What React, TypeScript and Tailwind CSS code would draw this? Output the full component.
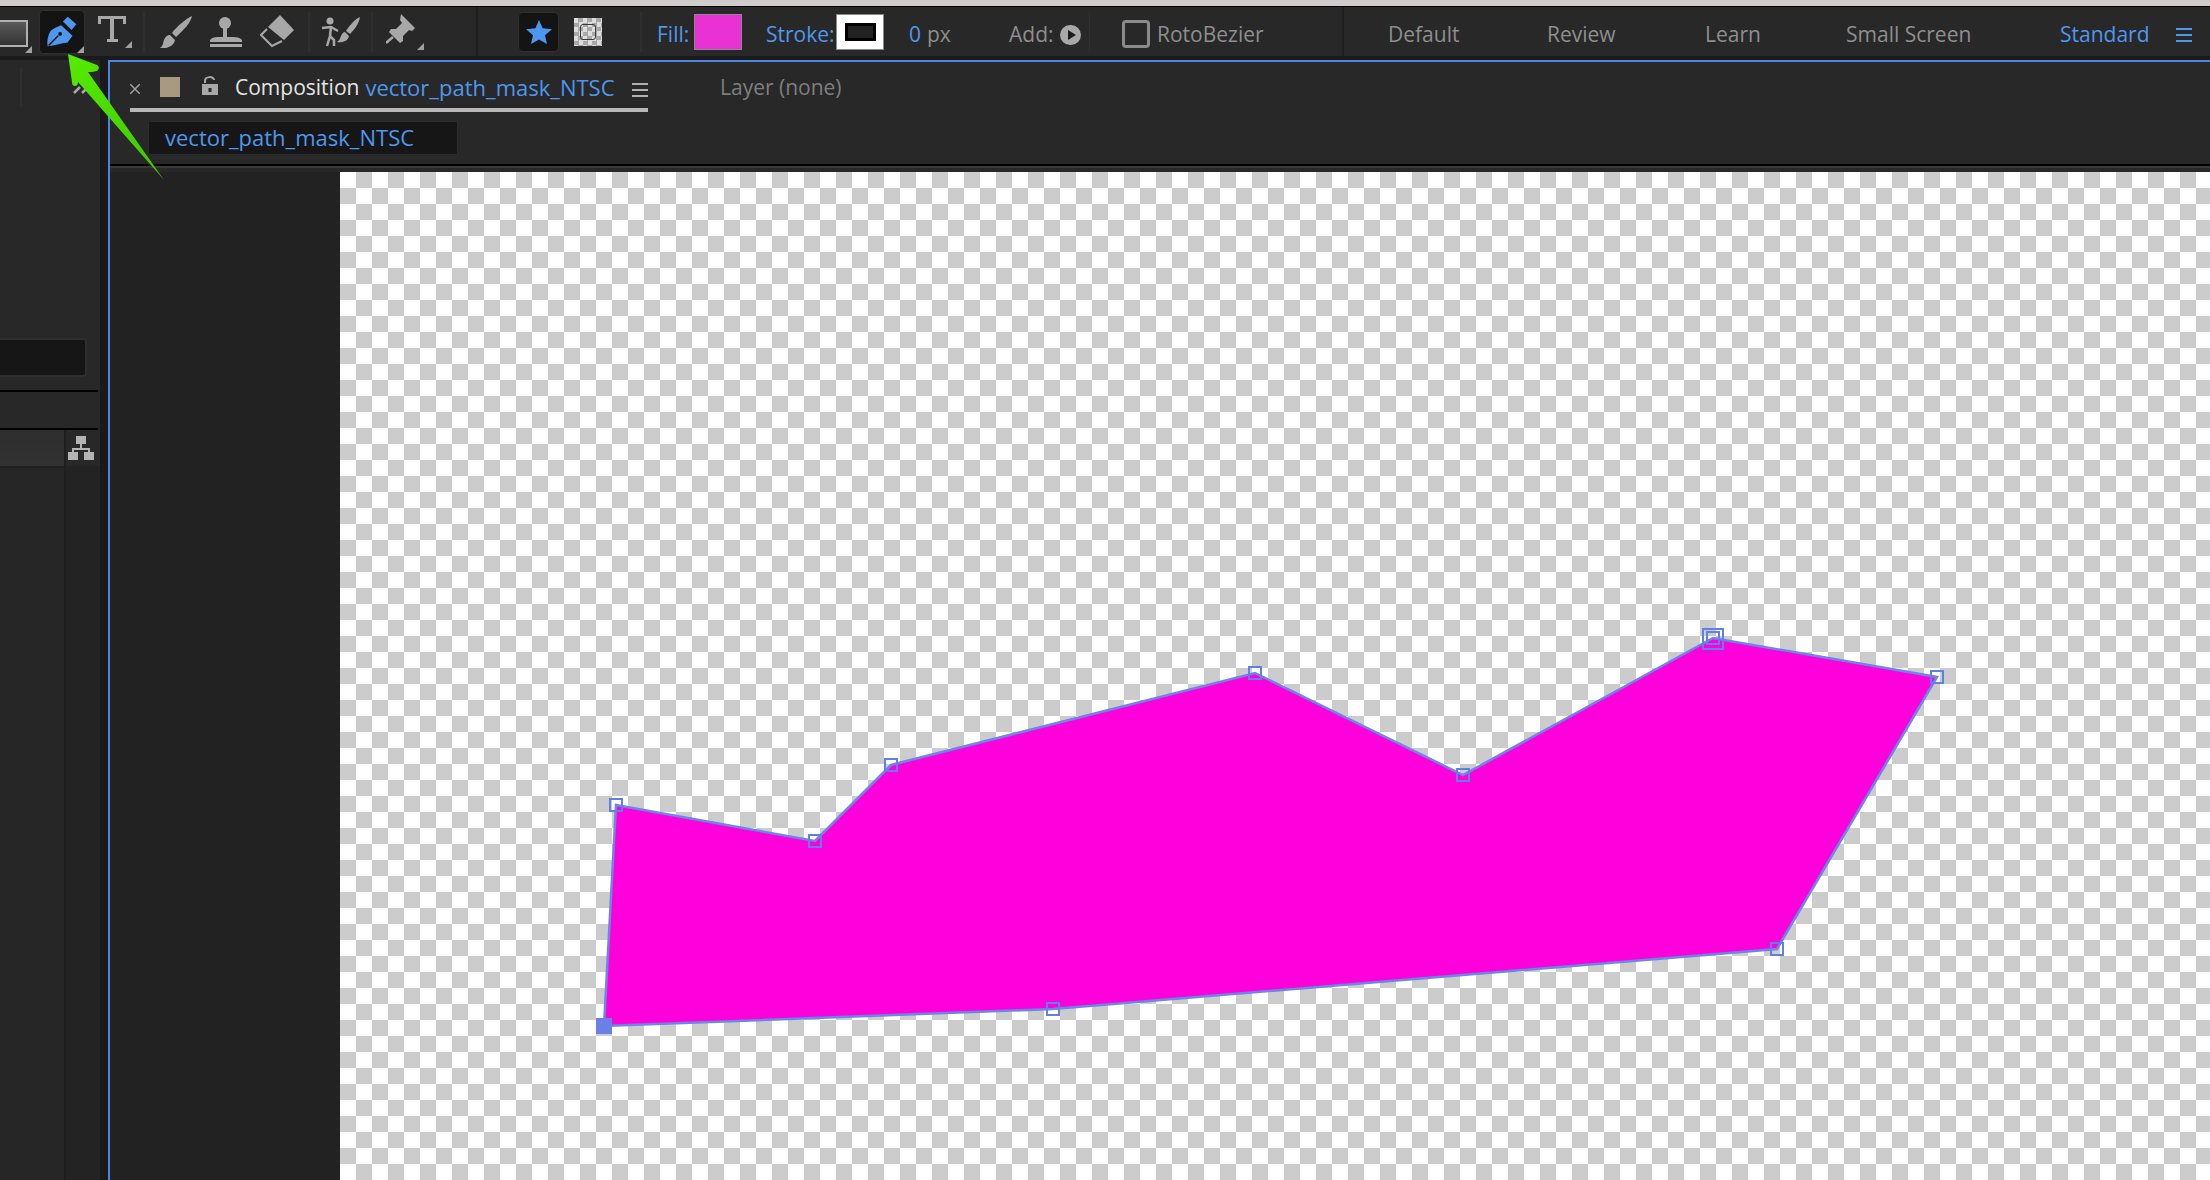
const FONT = "font-['Open_Sans',sans-serif]";

const corners: [number, number][] = [
  [604, 1026],
  [616, 805],
  [815, 841],
  [891, 765],
  [1255, 673],
  [1463, 775],
  [1713, 638],
  [1937, 677],
  [1777, 949],
  [1053, 1009],
];

function Corner() {
  return (
    <span className="absolute bottom-0 right-0 h-0 w-0 border-b-[7px] border-l-[7px] border-b-[#a0a0a0] border-l-transparent" />
  );
}

function Sep({ ml }: { ml: string }) {
  return <div className={`h-[40px] w-[2px] bg-[#2f2f2f] ${ml}`} />;
}

function PenIcon() {
  return (
    <svg viewBox="39 9 46 44" className="h-[44px] w-[46px]">
      <path d="M63 20 L68 15 L77 23 L72 29 Z" fill="#4e97ee" />
      <path d="M61 24 L73 35 C71 38 69 40 68 42 C61 43 54 45 47 46 C46 41 47 35 50 30 C53 27 57 26 61 24 Z" fill="#4e97ee" />
      <path d="M48 45 L58 35" stroke="#141414" strokeWidth="1.5" />
      <circle cx="60" cy="33" r="2" fill="#141414" />
    </svg>
  );
}

function TypeIcon() {
  return (
    <svg viewBox="98 17 28 26" className="h-[26px] w-[28px]" fill="#a8a8a8">
      <path d="M98 17 H126 V25 H123 V20 H114 V40 H118 V43 H107 V40 H110 V20 H101 V25 H98 Z" />
    </svg>
  );
}

function BrushIcon() {
  return (
    <svg viewBox="160 13 33 33" className="h-[33px] w-[33px]" fill="#a8a8a8">
      <path d="M192 14 C187 16 177 24 172 31 L176 35 C184 28 191 20 192 14 Z" />
      <path d="M170 33 L175 38 C174 44 167 47 160 46 C163 44 163 41 164 38 C165 35 167 33 170 33 Z" />
    </svg>
  );
}

function StampIcon() {
  return (
    <svg viewBox="210 13 32 31" className="h-[31px] w-[32px]" fill="#a8a8a8">
      <circle cx="225" cy="20" r="6" />
      <rect x="223" y="24" width="4" height="11" />
      <path d="M210 39 V37 Q212 34 218 34 H233 Q240 34 242 37 V39 Z" />
      <rect x="210" y="41" width="32" height="3" />
    </svg>
  );
}

function EraserIcon() {
  return (
    <svg viewBox="260 13 34 33" className="h-[33px] w-[34px]">
      <path d="M280 13 L294 28 L284 38 L268 25 Z" fill="#a8a8a8" />
      <path d="M267 27 L261 33 L272 44 L282 39" fill="none" stroke="#a8a8a8" strokeWidth="2" />
    </svg>
  );
}

function PuppetIcon() {
  return (
    <svg viewBox="321 14 39 32" className="h-[32px] w-[39px]">
      <circle cx="330" cy="19" r="3.5" fill="#a8a8a8" />
      <path d="M322 26 L331 25 L338 29 M331 25 L330 34 L327 44 M330 34 L334 38 L334 44" fill="none" stroke="#a8a8a8" strokeWidth="2.5" />
      <path d="M360 15 C355 17 349 24 346 29 L350 32 C355 27 359 21 360 15 Z" fill="#a8a8a8" />
      <path d="M345 30 L349 34 C348 39 343 41 337 40 C340 38 340 36 341 34 C342 32 343 30 345 30 Z" fill="#a8a8a8" />
    </svg>
  );
}

function PinIcon() {
  return (
    <svg viewBox="386 14 30 30" className="h-[30px] w-[30px]">
      <path d="M401 14 L415 28 L412 31 L409 30 L403 36 L403 41 L400 43 L389 32 L391 29 L396 29 L402 23 L400 20 Z" fill="#a8a8a8" />
      <path d="M393 37 L386 43" stroke="#a8a8a8" strokeWidth="2.5" />
    </svg>
  );
}

function Tree() {
  return (
    <svg viewBox="68 436 26 24" className="h-[24px] w-[26px]" fill="#b4b4b4">
      <rect x="76" y="436" width="10" height="8" />
      <rect x="80" y="444" width="2" height="4" />
      <rect x="72" y="448" width="18" height="2" />
      <rect x="72" y="450" width="2" height="2" />
      <rect x="88" y="450" width="2" height="2" />
      <rect x="68" y="452" width="10" height="8" />
      <rect x="84" y="452" width="10" height="8" />
    </svg>
  );
}

function Menu({ color, className }: { color: string; className: string }) {
  return (
    <div className={`flex h-[14px] w-[16px] shrink-0 flex-col justify-between ${className}`}>
      <span className={`h-[2px] ${color}`} />
      <span className={`h-[2px] ${color}`} />
      <span className={`h-[2px] ${color}`} />
    </div>
  );
}

function Toolbar() {
  return (
    <div className={`flex h-[49px] items-center overflow-hidden whitespace-nowrap bg-[#282828] ${FONT} text-[21px] text-[#8e8e8e]`}>
      <div className="relative -ml-[4px] flex h-[42px] w-[36px] shrink-0 items-start pt-[9px]">
        <div className="h-[27px] w-[32px] border-2 border-[#b0b0b0] bg-gradient-to-b from-[#5a5a5a] to-[#333333]" />
        <Corner />
      </div>
      <div className="relative ml-[7px] flex h-[44px] w-[46px] shrink-0 items-center justify-center rounded-[5px] border border-[#2f2f2f] bg-[#141414]">
        <PenIcon />
        <Corner />
      </div>
      <div className="relative ml-[13px] flex h-[32px] w-[34px] shrink-0 items-start">
        <TypeIcon />
        <Corner />
      </div>
      <Sep ml="ml-[11px]" />
      <div className="ml-[15px]"><BrushIcon /></div>
      <div className="ml-[17px]"><StampIcon /></div>
      <div className="ml-[18px]"><EraserIcon /></div>
      <Sep ml="ml-[14px]" />
      <div className="ml-[11px]"><PuppetIcon /></div>
      <Sep ml="ml-[11px]" />
      <div className="relative ml-[13px] h-[36px] w-[38px]">
        <PinIcon />
        <Corner />
      </div>
      <div className="ml-[52px] h-[49px] w-[2px] bg-[#1e1e1e]" />
      <div className="ml-[40px] flex h-[40px] w-[41px] shrink-0 items-center justify-center rounded-[5px] border border-[#2f2f2f] bg-[#141414]">
        <svg viewBox="0 0 26 24" className="h-[24px] w-[26px]" fill="#4e97ee">
          <path d="M13 0 L16.6 8.2 L26 9.2 L19 15.2 L21 24 L13 19.4 L5 24 L7 15.2 L0 9.2 L9.4 8.2 Z" />
        </svg>
      </div>
      <div className="ml-[15px] h-[28px] w-[28px] shrink-0 bg-[conic-gradient(#a8a8a8_25%,#dddddd_0_50%,#a8a8a8_0_75%,#dddddd_0)] bg-[length:9px_9px] p-[6px]">
        <div className="h-full w-full rounded-[3px] border border-[#3a3a3a]" />
      </div>
      <Sep ml="ml-[38px]" />
      <span className="ml-[15px] w-[33px] shrink-0 pt-[6px] text-[#4e97ee]">Fill:</span>
      <div className="ml-[4px] h-[36px] w-[48px] shrink-0 border border-[#8a8a8a] bg-[#e931d5]" />
      <span className="ml-[24px] w-[67px] shrink-0 pt-[6px] text-[#4e97ee]">Stroke:</span>
      <div className="ml-[3px] flex h-[36px] w-[48px] shrink-0 items-center justify-center border border-[#8a8a8a] bg-white">
        <div className="h-[18px] w-[31px] border-[3px] border-black bg-[#222222]" />
      </div>
      <span className="ml-[25px] w-[11px] shrink-0 pt-[6px] text-[#4e97ee]">0</span>
      <span className="ml-[7px] w-[22px] shrink-0 pt-[6px]">px</span>
      <span className="ml-[60px] w-[44px] shrink-0 pt-[6px]">Add:</span>
      <div className="ml-[7px] mt-[6px] flex h-[20px] w-[21px] shrink-0 items-center justify-center rounded-full bg-[#a8a8a8]">
        <div className="ml-[2px] h-0 w-0 border-y-[5px] border-l-[8px] border-y-transparent border-l-[#1c1c1c]" />
      </div>
      <div className="ml-[8px] h-[40px] w-[1px] bg-[#2f2f2f]" />
      <div className="ml-[32px] mt-[4px] h-[28px] w-[28px] shrink-0 rounded-[4px] border-[3px] border-[#8a8a8a]" />
      <span className="ml-[7px] w-[106px] shrink-0 pt-[6px]">RotoBezier</span>
      <div className="ml-[79px] h-[49px] w-[2px] bg-[#1e1e1e]" />
      <span className="ml-[44px] w-[71px] shrink-0 pt-[6px]">Default</span>
      <span className="ml-[88px] w-[70px] shrink-0 pt-[6px]">Review</span>
      <span className="ml-[88px] w-[54px] shrink-0 pt-[6px]">Learn</span>
      <span className="ml-[87px] w-[126px] shrink-0 pt-[6px]">Small Screen</span>
      <span className="ml-[88px] w-[87px] shrink-0 pt-[6px] text-[#4e97ee]">Standard</span>
      <Menu color="bg-[#4e97ee]" className="ml-[29px] mt-[6px]" />
    </div>
  );
}

function LeftPanel() {
  return (
    <div className="mt-[4px] flex w-[100px] shrink-0 flex-col bg-[#282828]">
      <div className="flex h-[48px] items-start pt-[8px]">
        <div className="ml-[20px] h-[39px] w-[2px] bg-[#303030]" />
        <svg viewBox="0 0 15 11" className="ml-[51px] mt-[15px] h-[11px] w-[15px]" fill="none" stroke="#a8a8a8" strokeWidth="2.5">
          <path d="M1 10 L7 4 M9 10 L14 5" />
        </svg>
      </div>
      <div className="h-[230px]" />
      <div className="h-[39px] w-[87px] rounded-r-[4px] border-2 border-l-0 border-[#2f2f2f] bg-[#161616]" />
      <div className="mt-[13px] h-[2px] w-[98px] bg-black" />
      <div className="h-[36px]" />
      <div className="h-[2px] w-[98px] bg-black" />
      <div className="flex flex-1">
        <div className="flex w-[64px] flex-col bg-[#262626]">
          <div className="h-[36px] bg-gradient-to-b from-[#2e2e2e] to-[#323232]" />
          <div className="h-[2px] bg-[#202020]" />
        </div>
        <div className="w-[2px] bg-[#1e1e1e]" />
        <div className="flex w-[34px] flex-col bg-[#232323]">
          <div className="flex h-[36px] items-start bg-[#282828] pl-[2px] pt-[6px]">
            <Tree />
          </div>
        </div>
      </div>
    </div>
  );
}

function Canvas() {
  const pts = corners.map(([x, y]) => `${x},${y}`).join(" ");
  return (
    <div className="relative flex-1 bg-[conic-gradient(#cccccc_25%,#ffffff_0_50%,#cccccc_0_75%,#ffffff_0)] bg-[length:32px_32px]">
      <svg viewBox="340 172 1870 1008" className="absolute inset-0 h-full w-full">
        <polygon points={pts} fill="#ff00dc" stroke="#6a86e6" strokeWidth="2.5" />
        {corners.slice(1).map(([x, y]) => (
          <rect key={x} x={x - 6} y={y - 6} width="12" height="12" fill="none" stroke="#6080e8" strokeWidth="2" />
        ))}
        <rect x="1703" y="629" width="20" height="20" fill="none" stroke="#6080e8" strokeWidth="2" />
        <rect x="596" y="1018" width="16" height="16" fill="#6a80e6" />
      </svg>
    </div>
  );
}

function CompPanel() {
  return (
    <div className={`mt-[4px] flex min-w-0 flex-1 flex-col border-l-2 border-t-2 border-[#4a86e0] bg-[#282828] ${FONT} text-[21px]`}>
      <div className="flex h-[50px]">
        <div className="ml-[20px] flex h-[50px] w-[518px] items-center whitespace-nowrap border-b-4 border-[#b8b8b8] pt-[4px]">
          <svg viewBox="0 0 10 10" className="mt-[4px] h-[10px] w-[10px]" stroke="#a0a0a0" strokeWidth="1.5">
            <path d="M0 0 L10 10 M10 0 L0 10" />
          </svg>
          <div className="ml-[20px] h-[20px] w-[20px] bg-[#a89a80]" />
          <svg viewBox="0 0 16 19" className="ml-[22px] mb-[4px] h-[19px] w-[16px]" fill="#a8a8a8">
            <path d="M3 7 V5 C3 0 12 0 12 4" fill="none" stroke="#a8a8a8" strokeWidth="2" />
            <path d="M0 8 H16 V19 H0 Z M6.5 12 V16 H9.5 V12 Z" fillRule="evenodd" />
          </svg>
          <span className="ml-[17px] mt-[2px] text-[#e4e4e4]">Composition</span>
          <span className="ml-[6px] text-[22px] text-[#4e97ee]">vector_path_mask_NTSC</span>
          <Menu color="bg-[#b0b0b0]" className="ml-[17px] mt-[6px]" />
        </div>
        <span className="ml-[72px] mt-[10px] text-[#7e7e7e]">Layer (none)</span>
      </div>
      <div className="h-[52px] pl-[38px] pt-[9px]">
        <div className="flex h-[34px] w-[310px] items-center rounded-[2px] border border-[#2c2c2c] bg-[#161616] pb-[2px] pl-[16px] text-[22px] text-[#4e97ee]">
          vector_path_mask_NTSC
        </div>
      </div>
      <div className="h-[2px] bg-black" />
      <div className="h-[2px] bg-[#3a3a3a]" />
      <div className="h-[4px]" />
      <div className="flex flex-1">
        <div className="w-[230px] bg-[#222222]" />
        <Canvas />
      </div>
    </div>
  );
}

export default function App() {
  return (
    <div className="relative flex h-[1180px] w-[2210px] flex-col overflow-hidden bg-[#1a1a1a]">
      <div className="h-[6px] bg-[#d0cccc]" />
      <div className="h-[1px] bg-black" />
      <Toolbar />
      <div className="flex min-h-0 flex-1">
        <LeftPanel />
        <div className="w-[8px] shrink-0" />
        <CompPanel />
      </div>
      {/* annotation arrow laid over the panels */}
      <svg viewBox="60 50 110 135" className="absolute left-[60px] top-[50px] h-[135px] w-[110px]">
        <defs>
          <linearGradient id="arrow" x1="0" y1="0" x2="1" y2="1">
            <stop offset="0" stopColor="#56ec00" />
            <stop offset="1" stopColor="#3ec400" />
          </linearGradient>
        </defs>
        <path
          d="M68 54 L97 65 Q100 67 98 70 Q96 72 88 72 L164 180 L78 82 Q78 86 75 86 Q72 86 72 82 Z"
          fill="url(#arrow)"
        />
      </svg>
    </div>
  );
}
